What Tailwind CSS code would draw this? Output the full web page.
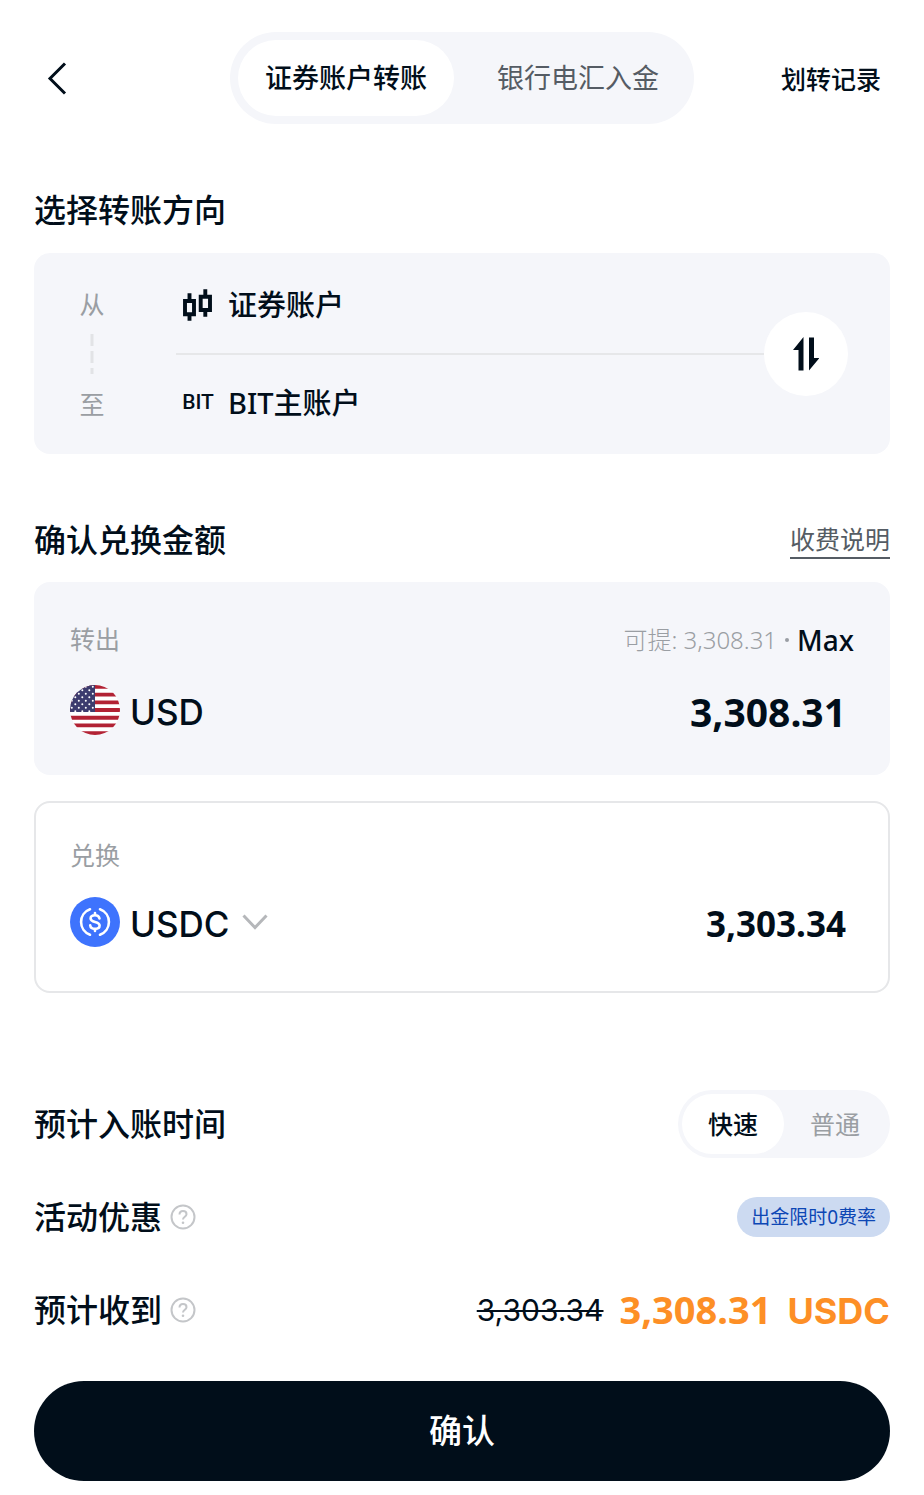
<!DOCTYPE html>
<html lang="zh-CN">
<head>
    <meta charset="UTF-8">
    <meta name="viewport" content="width=device-width, initial-scale=1.0">
    <title>证券账户转账</title>
    <script src="https://cdn.jsdelivr.net/npm/@tailwindcss/browser@4"></script>
    <style>
        body {
            font-family: 'Noto Sans', 'Noto Sans CJK SC', sans-serif;
        }
    </style>
</head>
<body class="bg-white text-[#010e1a] min-h-screen">

    <!-- 顶部导航 -->
    <header class="grid grid-cols-[1fr_auto_1fr] items-center px-[43px] pt-8">
        <button type="button" aria-label="返回" class="justify-self-start p-1">
            <svg class="w-5 h-9" viewBox="0 0 20 36" fill="none" stroke="currentColor" stroke-width="3">
                <path d="M18 3.5 3 18.5l15 15"/>
            </svg>
        </button>
        <div class="flex bg-[#f5f6fa] rounded-full p-2 text-[27px]">
            <button type="button" class="w-[216px] h-[76px] rounded-full bg-white font-medium">证券账户转账</button>
            <button type="button" class="w-[232px] h-[76px] pl-4 rounded-full text-[#555c64]">银行电汇入金</button>
        </div>
        <a href="#" class="justify-self-end pt-1 text-[25px] font-medium">划转记录</a>
    </header>

    <main class="px-[34px] pb-3">

        <!-- 转账方向 -->
        <h2 class="mt-[66px] text-[32px] leading-10 font-medium">选择转账方向</h2>
        <section class="mt-[23px] flex items-center bg-[#f5f6fa] rounded-2xl pr-[42px]">
            <div class="w-[116px] mr-[26px] flex flex-col items-center gap-3 text-[25px] leading-9 text-[#9a9ea3]">
                <span>从</span>
                <svg class="w-1 h-10" viewBox="0 0 4 40" stroke="#e2e3e6" stroke-width="3">
                    <path d="M2 0v40" stroke-dasharray="12 5"/>
                </svg>
                <span>至</span>
            </div>
            <div class="flex-1 pt-1 pb-[3px] text-[29px]">
                <div class="h-24 pl-1 flex items-center gap-3">
                    <span class="w-9 flex justify-center">
                        <svg class="w-[30px] h-8" viewBox="0 0 30 32" fill="none" stroke="currentColor" stroke-width="3.900">
                            <path d="M2 12h9v13.200H2zM6.500 4.300V12M6.500 25v6.700"/>
                            <path d="M17.700 7.800h9.300V21h-9.300zM22.300 .3v7.700M22.300 21v6.700"/>
                        </svg>
                    </span>
                    <span class="font-medium">证券账户</span>
                </div>
                <div class="h-[2px] bg-[#e6e7e9]"></div>
                <div class="h-24 pl-1 flex items-center gap-3">
                    <span class="w-9 text-center text-[21px] font-medium font-[Roboto]">BIT</span>
                    <span class="font-medium">BIT主账户</span>
                </div>
            </div>
            <button type="button" aria-label="切换方向" class="size-[84px] rounded-full bg-white flex items-center justify-center">
                <svg class="w-[26px] h-[34px]" viewBox="0 0 26 34" fill="currentColor">
                    <path d="M10.500 0v33.500H5.500V13H0z"/>
                    <path d="M16 0.500h5V21h5.500L16 33.500z"/>
                </svg>
            </button>
        </section>

        <!-- 兑换金额 -->
        <div class="mt-[66px] flex items-center justify-between">
            <h2 class="text-[32px] leading-10 font-medium">确认兑换金额</h2>
            <a href="#" class="text-[25px] leading-9 text-[#555c64] border-b-2 border-[#555c64]">收费说明</a>
        </div>
        <section class="mt-[22px] bg-[#f5f6fa] rounded-2xl px-9 py-10">
            <div class="h-9 flex items-center justify-between">
                <label for="amountOut" class="text-[25px] text-[#9a9ea3]">转出</label>
                <div class="flex items-center gap-2 text-[24px] text-[#9a9ea3]">
                    <span class="font-light">可提: 3,308.31</span>
                    <span class="size-1 rounded-full bg-[#9a9ea3]"></span>
                    <button type="button" class="text-[28px] font-medium text-[#010e1a]">Max</button>
                </div>
            </div>
            <div class="mt-[27px] h-[50px] flex items-center justify-between">
                <div class="flex items-center gap-[10px]">
                    <svg class="size-[50px]" viewBox="0 0 50 50">
                        <defs>
                            <clipPath id="flagClip"><circle cx="25" cy="25" r="25"/></clipPath>
                            <pattern id="stars" width="7" height="7" patternUnits="userSpaceOnUse">
                                <circle cx="1.800" cy="1.800" r="1" fill="#fff"/>
                                <circle cx="5.300" cy="5.300" r="1" fill="#fff"/>
                            </pattern>
                        </defs>
                        <g clip-path="url(#flagClip)">
                            <path fill="#fff" d="M0 0h50v50H0z"/>
                            <path stroke="#b22234" stroke-width="3.850" d="M0 1.900h50M0 9.600h50M0 17.300h50M0 25h50M0 32.700h50M0 40.400h50M0 48.100h50"/>
                            <path fill="#3c3b6e" d="M0 0h25v27H0z"/>
                            <path fill="url(#stars)" d="M0 0h25v27H0z"/>
                        </g>
                    </svg>
                    <span class="pt-1 text-[35px] font-medium font-[Inter]">USD</span>
                </div>
                <input id="amountOut" type="text" inputmode="decimal" value="3,308.31" class="w-64 pt-1 pr-2 bg-transparent text-right text-[39px] font-bold outline-none">
            </div>
        </section>
        <section class="mt-[26px] border-2 border-[#e6e7e9] rounded-2xl px-[34px] pt-[34px] pb-11">
            <label for="amountIn" class="block text-[25px] leading-9 text-[#9a9ea3]">兑换</label>
            <div class="mt-6 h-[50px] flex items-center justify-between">
                <div class="flex items-center gap-[10px]">
                    <svg class="size-[50px]" viewBox="0 0 50 50" fill="none" stroke="#fff" stroke-width="2.600" stroke-linecap="round">
                        <circle cx="25" cy="25" r="25" fill="#3e73fd" stroke="none"/>
                        <path d="M20 12.300a13.500 13.500 0 0 0 0 25.400M30 12.300a13.500 13.500 0 0 1 0 25.400"/>
                        <path d="M29.500 21.500c-.4-2.200-2-3.300-4.500-3.300s-4.400 1.200-4.400 3.200c0 4.700 9 2.400 9 7.200 0 2.100-1.900 3.300-4.600 3.300s-4.500-1.200-4.800-3.500M25 16v2M25 32v2"/>
                    </svg>
                    <div class="flex items-center gap-3">
                        <select aria-label="币种" class="appearance-none pt-1 bg-transparent text-[35px] font-medium font-[Inter] outline-none">
                            <option>USDC</option>
                        </select>
                        <svg class="w-[26px] h-4" viewBox="0 0 26 16" fill="none" stroke="#b5b7ba" stroke-width="3">
                            <path d="m1.500 1.500 11.500 12 11.500-12"/>
                        </svg>
                    </div>
                </div>
                <input id="amountIn" type="text" inputmode="decimal" value="3,303.34" class="w-64 pt-1 pr-2 bg-transparent text-right text-[35px] font-bold outline-none">
            </div>
        </section>

        <!-- 到账信息 -->
        <div class="mt-[97px] flex items-center justify-between">
            <h2 class="text-[32px] leading-10 font-medium">预计入账时间</h2>
            <div class="flex bg-[#f5f6fa] rounded-full p-1 text-[25px]">
                <button type="button" class="w-[102px] h-[60px] pt-[2px] rounded-full bg-white font-medium">快速</button>
                <button type="button" class="w-[102px] h-[60px] pt-[2px] rounded-full text-[#9a9ea3]">普通</button>
            </div>
        </div>
        <div class="mt-[39px] flex items-center justify-between">
            <div class="flex items-center gap-2">
                <h2 class="text-[32px] leading-10 font-medium">活动优惠</h2>
                <button type="button" aria-label="活动优惠说明">
                    <svg class="size-[26px]" viewBox="0 0 26 26" fill="none" stroke="#c4c6c9" stroke-width="2">
                        <circle cx="13" cy="13" r="11.500"/>
                        <path d="M9.500 10.500c0-2.200 1.500-3.500 3.500-3.500s3.500 1.300 3.500 3.200c0 2.400-3.500 2.700-3.500 5.300"/>
                        <circle cx="13" cy="18.700" r="1.300" fill="#c4c6c9" stroke="none"/>
                    </svg>
                </button>
            </div>
            <span class="h-10 px-[14px] flex items-center rounded-full bg-[#ccdaf1] text-[19px] text-[#0d47b5]">出金限时0费率</span>
        </div>
        <div class="mt-[53px] h-10 flex items-center justify-between">
            <div class="flex items-center gap-2">
                <h2 class="text-[32px] leading-10 font-medium">预计收到</h2>
                <button type="button" aria-label="预计收到说明">
                    <svg class="size-[26px]" viewBox="0 0 26 26" fill="none" stroke="#c4c6c9" stroke-width="2">
                        <circle cx="13" cy="13" r="11.500"/>
                        <path d="M9.500 10.500c0-2.200 1.500-3.500 3.500-3.500s3.500 1.300 3.500 3.200c0 2.400-3.500 2.700-3.500 5.300"/>
                        <circle cx="13" cy="18.700" r="1.300" fill="#c4c6c9" stroke="none"/>
                    </svg>
                </button>
            </div>
            <div class="flex items-center gap-4 leading-10">
                <del class="text-[30px] font-[Inter] decoration-2">3,303.34</del>
                <strong class="flex items-baseline gap-4 text-[#fd8f26]">
                    <span class="text-[38px] font-bold">3,308.31</span>
                    <span class="text-[36px] font-bold font-[Inter]">USDC</span>
                </strong>
            </div>
        </div>

        <button type="button" class="mt-[51px] w-full h-[100px] rounded-full bg-[#010e1a] text-white text-[33px] font-medium">确认</button>
    </main>

</body>
</html>
